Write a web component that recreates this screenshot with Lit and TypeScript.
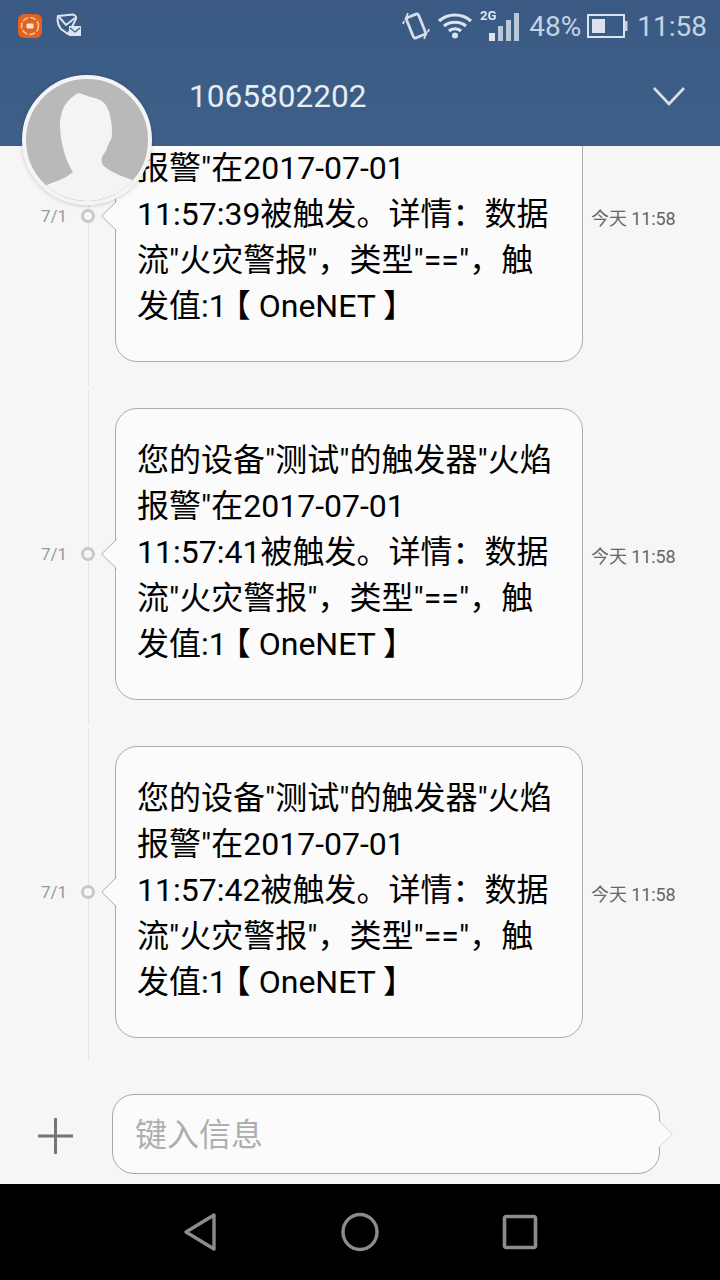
import { LitElement, html, css } from "lit";
import { customElement } from "lit/decorators.js";

const msgs = ["11:57:39", "11:57:41", "11:57:42"];

@customElement("app-root")
export class AppRoot extends LitElement {
  static styles = css`
    :host { display: block; width: 720px; height: 1280px; position: relative; overflow: hidden; background: #f6f6f6;
      font-family: Roboto, "Noto Sans CJK SC", sans-serif; }
    .page { display: flex; flex-direction: column; height: 1280px; }
    .header { height: 146px; flex: none; background: linear-gradient(180deg, #3a5a83 0%, #3c5d85 60%, #3e6088 100%); display: flex; flex-direction: column; }
    .status { height: 52px; display: flex; align-items: center; color: #c6d3e3; font-size: 28px; padding: 0 13px 0 17px; }
    .status svg { display: block; flex: none; }
    .left-icons { display: flex; gap: 13px; align-items: center; }
    .spacer { flex: 1; }
    .wifi { margin-left: 7px; }
    .signal { margin-left: 6px; }
    .pct { margin-left: 9px; width: 54px; }
    .bat { margin-left: 4px; }
    .clock { margin-left: 8px; }
    .titlebar { flex: 1; display: flex; align-items: center; padding: 0 35px 0 189px; }
    .title { flex: 1; font-size: 31.6px; color: #e6edf5; position: relative; top: -3px; }
    .chev { position: relative; top: -3px; }
    .list { flex: 1; min-height: 0; overflow: hidden; display: flex; flex-direction: column; gap: 46px; padding-left: 41px; }
    .row { flex: none; display: flex; align-items: center; position: relative; }
    .row:first-child { margin-top: -76px; }
    .row::before { content: ""; position: absolute; left: 47px; width: 1px; top: -18px; bottom: -24px; background: #e6e6e6; }
    .row:last-child::before { bottom: -22px; }
    .date { width: 40px; font-size: 17px; color: #999; position: relative; z-index: 1; }
    .dot { width: 14px; height: 14px; box-sizing: border-box; border: 3px solid #c8c8c8; border-radius: 50%; background: #f6f6f6; position: relative; margin-right: 20px; }
    .bubble { width: 468px; box-sizing: border-box; background: #fbfbfb; border: 1px solid #acacac; border-radius: 22px; padding: 28px 21px 32px; font-size: 32px; line-height: 46px; color: #000; position: relative; white-space: nowrap; }
    .bubble.scrolled { padding-top: 74px; }
    .bk { font-feature-settings: "halt"; margin-left: 8px; }
    .tail { position: absolute; left: -15px; top: 50%; margin-top: -15px; display: block; }
    .time { margin-left: 8px; font-size: 18px; color: #666; position: relative; top: 1px; letter-spacing: -0.1px; }
    .composer { flex: none; height: 90px; padding: 0 60px 0 38px; margin-top: 34px; display: flex; align-items: flex-start; box-sizing: border-box; }
    .plus { margin-top: 24px; display: block; flex: none; }
    .input { margin-left: 38px; width: 549px; height: 80px; box-sizing: border-box; background: #fbfbfb; border: 1px solid #a8a8a8; border-radius: 22px; display: flex; align-items: center; padding: 0 0 4px 22px; font-size: 32px; color: #aeaeae; position: relative; }
    .input .send { position: absolute; right: -15px; top: 50%; margin-top: -14px; display: block; }
    .nav { flex: none; height: 96px; background: #000; display: flex; align-items: center; justify-content: center; }
    .nav div { width: 160px; display: flex; justify-content: center; }
    .nav svg { display: block; }
    .avatar { position: absolute; left: 22px; top: 75px; width: 130px; height: 130px; box-shadow: 0 1px 4px rgba(0,0,0,.18); border-radius: 50%; }
    .avatar svg { display: block; }
  `;

  private lines(t: string, scrolled: boolean) {
    return html`${scrolled ? "" : html`<div>您的设备"测试"的触发器"火焰</div>`}<div>报警"在2017-07-01</div><div>${t}被触发。详情：数据</div><div>流"火灾警报"，类型"=="，触</div><div>发值:1<span class="bk">【</span> OneNET 】</div>`;
  }

  render() {
    return html`
      <div class="page">
        <div class="header">
          <div class="status">
            <div class="left-icons">
              <svg width="26" height="26" viewBox="0 0 26 26"><rect x="1" y="1" width="24" height="24" rx="6" fill="#e2621f"/><circle cx="13" cy="13" r="8.5" fill="none" stroke="#f4c9ae" stroke-width="1.5" stroke-dasharray="6 2"/><rect x="9.5" y="10.5" width="7" height="5" rx="1" fill="#f8e3d5"/></svg>
              <svg width="26" height="26" viewBox="0 0 26 26" fill="none" stroke="#dbe4ee" stroke-width="2"><path d="M2 3 L17 1.5 C20 2 21 5 19 8 L12 21 L5 16 C2 12 1 7 2 3 Z" /><path d="M3 4 L10 12 L19 5"/><rect x="13" y="13" width="12" height="10" fill="#dbe4ee" stroke="none"/><path d="M14 15 L19 19 L24 15" stroke="#3d5f87" stroke-width="1.3"/></svg>
            </div>
            <div class="spacer"></div>
            <svg width="28" height="30" viewBox="0 0 28 30" fill="none" stroke="#d5dfea"><rect x="7.5" y="4" width="13" height="22" rx="2" stroke-width="2.8" transform="rotate(-22 14 15)"/><path d="M3 9 L6 2 M1 13 L2 10 M25 21 L22 28 M27 18 L26 21" stroke-width="1.8"/></svg>
            <svg class="wifi" width="36" height="26" viewBox="0 0 36 26" fill="none" stroke="#dbe4ee" stroke-width="3.2"><path d="M2 8 C11 0 25 0 34 8"/><path d="M7 13 C13 8 23 8 29 13"/><path d="M12 18 C15 15 21 15 24 18"/><circle cx="18" cy="22.5" r="3" fill="#dbe4ee" stroke="none"/></svg>
            <svg class="signal" width="41" height="34" viewBox="0 0 41 34"><text x="1" y="11" font-size="13" font-weight="700" fill="#dbe4ee" font-family="Roboto">2G</text><rect x="10" y="24" width="6" height="8" fill="#dbe4ee"/><rect x="19" y="17" width="5" height="15" fill="#b9c8da"/><rect x="27" y="11" width="5" height="21" fill="#b9c8da"/><rect x="35" y="4" width="5" height="28" fill="#b9c8da"/></svg>
            <div class="pct">48%</div>
            <svg class="bat" width="42" height="26" viewBox="0 0 42 26"><rect x="1" y="2" width="36" height="22" fill="none" stroke="#dbe4ee" stroke-width="2"/><rect x="5" y="6" width="13" height="14" fill="#dbe4ee"/><rect x="38" y="8" width="2.5" height="10" fill="#c6d3e3"/></svg>
            <div class="clock">11:58</div>
          </div>
          <div class="titlebar">
            <div class="title">1065802202</div>
            <svg class="chev" width="32" height="20" viewBox="0 0 32 20" fill="none" stroke="#d5e0ec" stroke-width="2.6"><path d="M1 2 L16 18 L31 2"/></svg>
          </div>
        </div>
        <div class="list">
          ${msgs.map((t, i) => html`
            <div class="row">
              <div class="date">7/1</div>
              <div class="dot"></div>
              <div class="bubble ${i === 0 ? "scrolled" : ""}">
                <svg class="tail" width="16" height="30" viewBox="0 0 16 30"><path d="M15.5 0.5 L1.5 14 Q1 15 1.5 16 L15.5 29.5" fill="#fbfbfb" stroke="#acacac" stroke-width="1"/><rect x="15" y="1" width="2" height="28" fill="#fbfbfb"/></svg>
                ${this.lines(t, i === 0)}
              </div>
              <div class="time">今天 11:58</div>
            </div>`)}
        </div>
        <div class="composer">
          <svg class="plus" width="36" height="36" viewBox="0 0 36 36"><rect x="0" y="16.5" width="35" height="3" fill="#757575"/><rect x="16" y="0" width="3" height="36" fill="#757575"/></svg>
          <div class="input">键入信息
            <svg class="send" width="16" height="28" viewBox="0 0 16 28"><path d="M0.5 0.5 L13.5 13 Q14.5 14 13.5 15 L0.5 27.5" fill="#fbfbfb" stroke="#d4d4d4"/><rect x="-1" y="1" width="2" height="26" fill="#fbfbfb"/></svg>
          </div>
        </div>
        <div class="nav">
          <div><svg width="36" height="40" viewBox="0 0 36 40" fill="none" stroke="#8c8c8c" stroke-width="3.4" stroke-linejoin="round"><path d="M31 3 L3 20 L31 37 Z" transform="translate(1 0)"/></svg></div>
          <div><svg width="40" height="40" viewBox="0 0 40 40" fill="none" stroke="#8c8c8c" stroke-width="3.4"><ellipse cx="20" cy="20" rx="17" ry="17.5"/></svg></div>
          <div><svg width="36" height="36" viewBox="0 0 36 36" fill="none" stroke="#8c8c8c" stroke-width="3.6" stroke-linejoin="round"><rect x="2.5" y="2.5" width="31" height="31" rx="2"/></svg></div>
        </div>
      </div>
      <div class="avatar">
        <svg width="130" height="130" viewBox="0 0 130 130"><defs><clipPath id="c"><circle cx="65" cy="65" r="61"/></clipPath></defs><circle cx="65" cy="65" r="63" fill="#b9b9b9" stroke="#f4f4f4" stroke-width="4"/><path clip-path="url(#c)" fill="#f4f4f4" d="M56 18 C60 19 64 20 68 22 C76 23 83 27 85 32 C89 40 90 50 90 60 C90 64 88 66 86 70 C85 75 82 78 80 82 C79 86 80 90 83 92 C92 99 105 103 116 107 L130 130 L5 130 L23 111 C28 108 33 107 38 105 C43 103 47 100 51 97 C47 91 45 86 43 80 C40 70 38 60 38 50 C38 42 40 35 43 30 C46 25 51 21 56 18 Z"/></svg>
      </div>
    `;
  }
}
